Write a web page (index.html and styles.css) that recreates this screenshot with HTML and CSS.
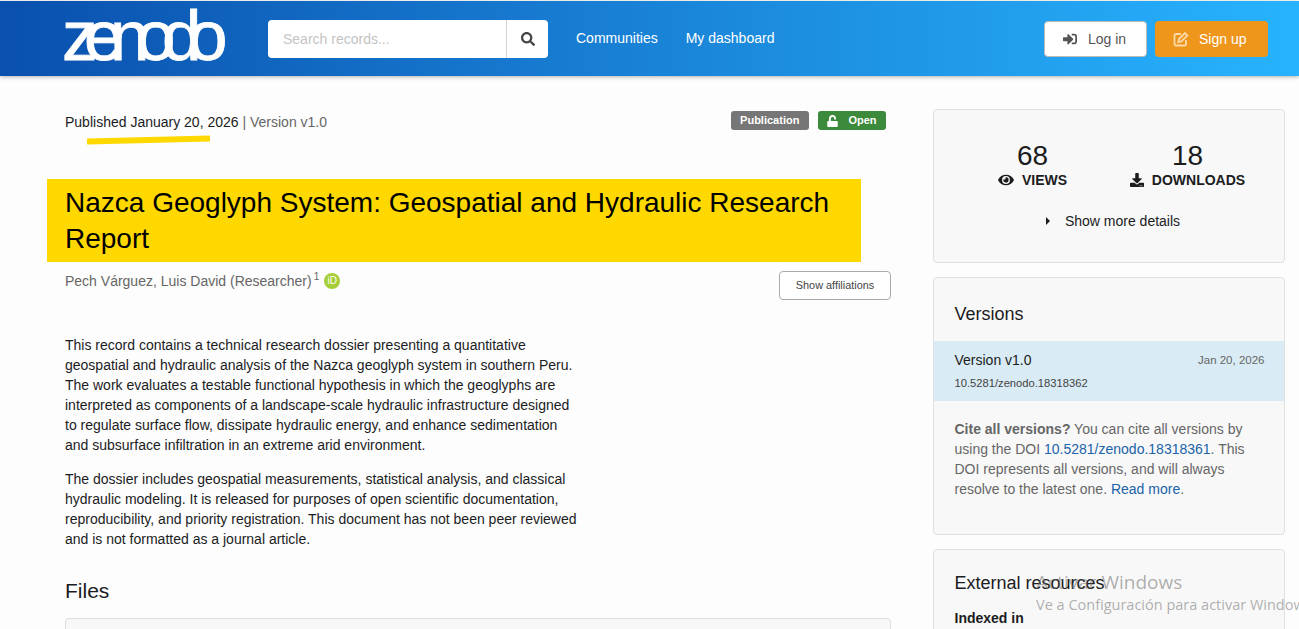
FILE: index.html
```html
<!DOCTYPE html>
<html lang="en">
<head>
    <meta charset="UTF-8">
    <meta name="viewport" content="width=device-width, initial-scale=1.0">
    <title>Nazca Geoglyph System</title>
    <link rel="stylesheet" href="styles.css">
</head>
<body>
    <div class="banner">
        <div class="logo">zenodo</div>
        <div class="search">
            <div class="search-input">Search records...</div>
            <div class="search-button">
                <svg class="icon" width="14" height="14" viewBox="0 0 512 512"><path d="M505 442.7L405.3 343c-4.5-4.5-10.6-7-17-7H372c27.6-35.3 44-79.7 44-128C416 93.1 322.9 0 208 0S0 93.1 0 208s93.1 208 208 208c48.3 0 92.7-16.4 128-44v16.3c0 6.4 2.5 12.5 7 17l99.7 99.7c9.4 9.4 24.6 9.4 33.9 0l28.3-28.3c9.4-9.4 9.4-24.6.1-34zM208 336c-70.7 0-128-57.2-128-128 0-70.7 57.2-128 128-128 70.7 0 128 57.2 128 128 0 70.7-57.2 128-128 128z"/></svg>
            </div>
        </div>
        <div class="nav">
            <span>Communities</span>
            <span>My dashboard</span>
        </div>
        <div class="auth">
            <div class="btn btn-login">
                <svg class="icon" width="14" height="14" viewBox="0 0 512 512"><path d="M416 448h-84c-6.6 0-12-5.4-12-12v-40c0-6.6 5.4-12 12-12h84c17.7 0 32-14.3 32-32V160c0-17.7-14.3-32-32-32h-84c-6.6 0-12-5.4-12-12V76c0-6.6 5.4-12 12-12h84c53 0 96 43 96 96v192c0 53-43 96-96 96zm-47-201L201 79c-15-15-41-4.5-41 17v96H24c-13.3 0-24 10.7-24 24v96c0 13.3 10.7 24 24 24h136v96c0 21.5 26 32 41 17l168-168c9.3-9.4 9.3-24.6 0-34z"/></svg>
                Log in
            </div>
            <div class="btn btn-signup">
                <svg class="icon-edit" width="16" height="16" viewBox="0 0 16 16"><path d="M13 9v4.2a1.3 1.3 0 0 1-1.3 1.3H2.8a1.3 1.3 0 0 1-1.3-1.3V4.3A1.3 1.3 0 0 1 2.8 3H8"/><path d="M6 8l-.6 3 3-.6 6-6-2.400-2.400z"/></svg>
                Sign up
            </div>
        </div>
    </div>

    <div class="container">
        <div class="main">
            <div class="meta">
                <div class="published">Published January 20, 2026 <span class="muted">| Version v1.0</span></div>
                <div class="labels">
                    <span class="label label-grey">Publication</span>
                    <span class="label label-green">
                        <svg class="icon" width="11" height="12" viewBox="0 0 448 512"><path d="M400 256H152V152.900c0-39.600 31.700-72.500 71.300-72.900 40-.4 72.700 32.100 72.700 72v16c0 13.300 10.700 24 24 24h32c13.300 0 24-10.700 24-24v-16C376 68 307.500-.3 223.500 0 139.500.3 72 69.500 72 153.500V256H48c-26.500 0-48 21.500-48 48v160c0 26.500 21.500 48 48 48h352c26.500 0 48-21.500 48-48V304c0-26.500-21.500-48-48-48z"/></svg>
                        Open
                    </span>
                </div>
            </div>
            <div class="underline"></div>

            <h1 class="title">Nazca Geoglyph System: Geospatial and Hydraulic Research Report</h1>

            <div class="creators">
                <div class="author">
                    Pech Várguez, Luis David (Researcher)<sup>1</sup>
                    <span class="orcid">iD</span>
                </div>
                <div class="affiliations">Show affiliations</div>
            </div>

            <div class="description">
                <p>This record contains a technical research dossier presenting a quantitative geospatial and hydraulic analysis of the Nazca geoglyph system in southern Peru. The work evaluates a testable functional hypothesis in which the geoglyphs are interpreted as components of a landscape-scale hydraulic infrastructure designed to regulate surface flow, dissipate hydraulic energy, and enhance sedimentation and subsurface infiltration in an extreme arid environment.</p>
                <p>The dossier includes geospatial measurements, statistical analysis, and classical hydraulic modeling. It is released for purposes of open scientific documentation, reproducibility, and priority registration. This document has not been peer reviewed and is not formatted as a journal article.</p>
            </div>

            <h2 class="files-title">Files</h2>
            <div class="files-box"></div>
        </div>

        <div class="sidebar">
            <div class="card card-stats">
                <div class="stats">
                    <div class="stat">
                        <div class="stat-value">68</div>
                        <div class="stat-label">
                            <svg class="icon" width="16" height="14" viewBox="0 0 576 512"><path d="M572.520 241.400C518.290 135.590 410.930 64 288 64S57.680 135.640 3.480 241.410a32.350 32.350 0 0 0 0 29.190C57.710 376.410 165.070 448 288 448s230.320-71.640 284.520-177.410a32.350 32.350 0 0 0 0-29.190zM288 400a144 144 0 1 1 144-144 143.930 143.930 0 0 1-144 144zm0-240a95.310 95.310 0 0 0-25.310 3.790 47.850 47.850 0 0 1-66.900 66.900A95.780 95.780 0 1 0 288 160z"/></svg>
                            VIEWS
                        </div>
                    </div>
                    <div class="stat">
                        <div class="stat-value">18</div>
                        <div class="stat-label">
                            <svg class="icon" width="14" height="14" viewBox="0 0 512 512"><path d="M216 0h80c13.300 0 24 10.700 24 24v168h87.700c17.800 0 26.700 21.500 14.100 34.100L269.700 378.300c-7.500 7.500-19.800 7.500-27.300 0L90.100 226.100c-12.600-12.600-3.700-34.100 14.100-34.100H192V24c0-13.300 10.700-24 24-24zm296 376v112c0 13.300-10.700 24-24 24H24c-13.300 0-24-10.700-24-24V376c0-13.300 10.700-24 24-24h146.700l49 49c20.100 20.100 52.500 20.100 72.600 0l49-49H488c13.300 0 24 10.700 24 24zm-124 88c0-11-9-20-20-20s-20 9-20 20 9 20 20 20 20-9 20-20zm64 0c0-11-9-20-20-20s-20 9-20 20 9 20 20 20 20-9 20-20z"/></svg>
                            DOWNLOADS
                        </div>
                    </div>
                </div>
                <div class="more-details"><span class="caret"></span>Show more details</div>
            </div>

            <div class="card card-versions">
                <h3>Versions</h3>
                <div class="version-row">
                    <div class="version-top">
                        <span class="version-name">Version v1.0</span>
                        <span class="version-date">Jan 20, 2026</span>
                    </div>
                    <div class="version-doi">10.5281/zenodo.18318362</div>
                </div>
                <p class="cite"><strong>Cite all versions?</strong> You can cite all versions by using the DOI <a>10.5281/zenodo.18318361</a>. This DOI represents all versions, and will always resolve to the latest one. <a>Read more</a>.</p>
            </div>

            <div class="card card-external">
                <h3>External resources</h3>
                <div class="indexed">Indexed in</div>
            </div>
        </div>
    </div>

    <div class="watermark">
        <div class="watermark-title">Activar Windows</div>
        <div class="watermark-text">Ve a Configuración para activar Windows.</div>
    </div>
</body>
</html>
```

FILE: styles.css
```css
html, body {
    height: 629px;
    overflow: hidden;
}

body {
    font-family: "Liberation Sans", Arial, sans-serif;
    font-size: 14px;
    line-height: 20px;
    margin: 0;
    padding: 0;
    background-color: #fdfdfd;
    color: #1b1c1d;
}

.icon {
    fill: currentColor;
    flex: none;
}

/* header */
.banner {
    height: 75px;
    margin-top: 1px;
    display: flex;
    align-items: center;
    background: linear-gradient(90deg, #0a50ae 0%, #1d8fe0 62%, #27b3fe 100%);
    box-shadow: 0 1px 4px rgba(0, 0, 0, 0.3);
    color: #fff;
    padding: 0 31px 0 65px;
}

.logo {
    width: 206px;
    height: 75px;
    margin-left: -3px;
    flex: none;
    font-size: 71px;
    line-height: 70px;
    letter-spacing: -13.500px;
    -webkit-text-stroke: 0.8px #fff;
}

.search {
    display: flex;
    width: 280px;
    height: 38px;
    margin-top: 1px;
    background: #fff;
    border-radius: 4px;
    flex: none;
}

.search-input {
    flex: 1;
    padding: 9px 15px;
    color: #c4c4c4;
}

.search-button {
    width: 41px;
    display: flex;
    align-items: center;
    justify-content: center;
    border-left: 1px solid #d4d4d5;
    color: #444;
}

.nav {
    display: flex;
    gap: 28px;
    margin-left: 28px;
    margin-top: -1px;
}

.auth {
    display: flex;
    gap: 8px;
    margin-left: auto;
}

.btn {
    height: 36px;
    box-sizing: border-box;
    border-radius: 4px;
    display: flex;
    align-items: center;
    gap: 11px;
    padding-left: 18px;
}

.btn-login {
    width: 103px;
    background: #fff;
    color: #555;
    border: 1px solid #bbb;
}

.btn-signup {
    width: 113px;
    background: #ee951b;
    color: #fff;
    gap: 10px;
}

.icon-edit {
    fill: none;
    stroke: #fbd9a8;
    stroke-width: 1.8;
    flex: none;
}

/* layout */
.container {
    display: flex;
    padding: 33px 14px 0 65px;
}

.main {
    width: 826px;
    flex: none;
}

.sidebar {
    width: 352px;
    margin-left: 42px;
    flex: none;
}

/* record header */
.meta {
    display: flex;
    justify-content: space-between;
    padding-right: 5px;
    height: 26px;
}

.published {
    line-height: 26px;
}

.muted {
    color: #666;
}

.underline {
    width: 123px;
    height: 6px;
    margin: 2px 0 0 22px;
    background: #ffd800;
    transform: rotate(-1.300deg);
}

.labels {
    display: flex;
    gap: 9px;
    margin-top: 2px;
}

.label {
    height: 19px;
    border-radius: 3px;
    font-size: 11px;
    font-weight: bold;
    line-height: 19px;
    color: #fff;
    padding: 0 9.500px;
    display: flex;
    align-items: center;
}

.label-grey {
    background: #767676;
}

.label-green {
    background: #3c8a3c;
    gap: 10px;
}

.title {
    margin: 36px 30px 0 -18px;
    padding: 6px 18px 5px;
    background: #ffd800;
    color: #000;
    font-size: 28px;
    font-weight: normal;
    line-height: 36px;
    width: 778px;
}

.creators {
    display: flex;
    justify-content: space-between;
    align-items: flex-start;
    margin-top: 9px;
}

.author {
    color: #666;
    display: flex;
    align-items: center;
    height: 20px;
}

.author sup {
    font-size: 10px;
    line-height: 10px;
    align-self: flex-start;
    margin-left: 2px;
    margin-top: 1px;
}

.orcid {
    width: 16px;
    height: 16px;
    border-radius: 50%;
    background: #a6ce39;
    color: #fff;
    font-size: 10px;
    line-height: 16px;
    text-align: center;
    margin-left: 5px;
}

.affiliations {
    width: 112px;
    height: 29px;
    box-sizing: border-box;
    border: 1px solid #aaa;
    border-radius: 4px;
    background: #fff;
    color: #444;
    font-size: 10.900px;
    line-height: 27px;
    text-align: center;
}

/* description */
.description {
    width: 515px;
    margin-top: 35px;
}

.description p {
    margin: 0 0 14px;
}

.files-title {
    margin: 28px 0 0;
    font-size: 21px;
    font-weight: normal;
    line-height: 28px;
}

.files-box {
    margin-top: 13px;
    height: 40px;
    border: 1px solid #ddd;
    border-radius: 4px;
    background: #f8f8f8;
}

/* sidebar cards */
.card {
    box-sizing: border-box;
    border: 1px solid #e0e0e0;
    border-radius: 4px;
    background: #f8f8f8;
    margin-bottom: 14px;
}

.card h3 {
    margin: 0;
    font-size: 18px;
    font-weight: normal;
    line-height: 24px;
    padding: 0 20.500px;
}

.card-stats {
    height: 154px;
    padding-top: 31px;
}

.stats {
    display: flex;
    justify-content: center;
    padding-left: 2px;
}

.stat {
    width: 155px;
    text-align: center;
}

.stat-value {
    font-size: 28px;
    line-height: 29px;
}

.stat-label {
    display: flex;
    justify-content: center;
    align-items: center;
    gap: 8px;
    font-size: 14px;
    font-weight: bold;
    line-height: 20px;
}

.more-details {
    display: flex;
    justify-content: center;
    align-items: center;
    margin-top: 21px;
    padding-left: 8px;
}

.caret {
    width: 0;
    height: 0;
    border-left: 4px solid #1b1c1d;
    border-top: 4px solid transparent;
    border-bottom: 4px solid transparent;
    margin-right: 15px;
}

.card-versions {
    height: 258px;
    padding-top: 24px;
}

.version-row {
    background: #d9ebf4;
    margin-top: 15px;
    height: 60px;
    padding: 9px 19.500px 0 20.500px;
    box-sizing: border-box;
}

.version-top {
    display: flex;
    justify-content: space-between;
    align-items: center;
}

.version-date {
    font-size: 11.500px;
    color: #666;
}

.version-doi {
    font-size: 11.200px;
    color: #444;
    margin-top: 3px;
}

.cite {
    margin: 18px 20.500px 0;
    color: #666;
}

.cite a {
    color: #2063a8;
}

.card-external {
    height: 120px;
    padding-top: 21px;
}

.indexed {
    font-weight: bold;
    padding: 0 20.500px;
    margin-top: 13px;
}

/* activation notice over the page */
.watermark {
    position: absolute;
    left: 1036px;
    top: 570px;
    width: 263px;
    overflow: hidden;
    color: rgba(110, 110, 110, 0.55);
    font-family: "Open Sans", sans-serif;
    white-space: nowrap;
}

.watermark-title {
    font-size: 19px;
    line-height: 24px;
}

.watermark-text {
    font-size: 14.500px;
    line-height: 20px;
    margin-top: 1px;
}
```
